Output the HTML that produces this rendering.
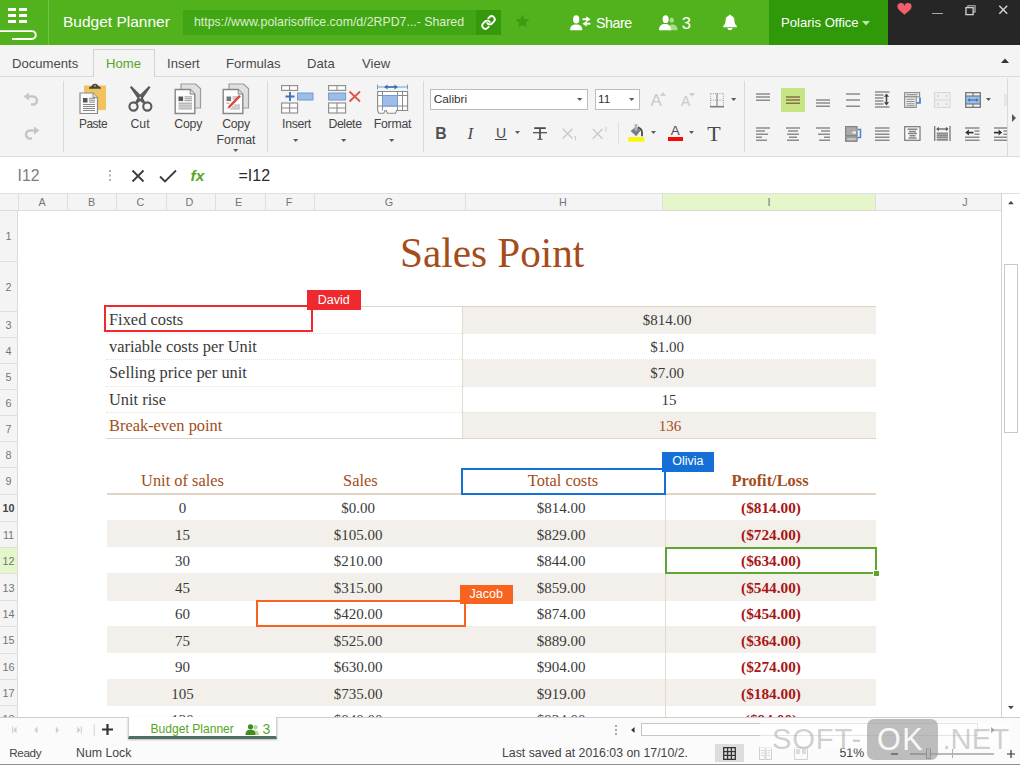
<!DOCTYPE html>
<html lang="en">
<head>
<meta charset="utf-8">
<title>Budget Planner - Polaris Office</title>
<style>
*{box-sizing:border-box;margin:0;padding:0}
html,body{width:1020px;height:765px;overflow:hidden;background:#fff}
body{position:relative;font-family:"Liberation Sans",sans-serif;font-size:13px;color:#444}
.abs{position:absolute}
.t{position:absolute;white-space:nowrap;line-height:1}
svg{position:absolute;overflow:visible}
/* top bar */
#top{left:0;top:0;width:1020px;height:44.500px;background:#51b21e}
#top .t{color:#fff}
/* tabs */
#tabs{left:0;top:45px;width:1020px;height:32px;background:#f4f4f4;border-bottom:1px solid #d9d9d9}
#tabs .t{font-size:13.1px;color:#4a4a4a;top:11.700px}
#hometab{left:93px;top:4px;width:62px;height:28px;background:#f4f4f4;border:1px solid #d4d4d4;border-bottom:none}
/* ribbon */
#ribbon{left:0;top:77px;width:1020px;height:80px;background:#f4f4f4;border-bottom:1px solid #dcdcdc}
#ribbon .lbl{font-size:12.3px;color:#444;text-align:center;transform:translateX(-50%)}
.vsep{position:absolute;width:1px;background:#dadada}
/* formula */
#fbar{left:0;top:157px;width:1020px;height:36px;background:#fff}
/* grid */
#colhdr{left:0;top:193px;width:1001px;height:18px;background:#f4f4f4;border-top:1px solid #e0e0e0;border-bottom:1px solid #dcdcdc}
#colhdr .t{font-size:10.8px;color:#757575;top:3px;transform:translateX(-50%)}
#colhdr i{position:absolute;top:0;width:1px;height:16px;background:#dedede}
#rowhdr{left:0;top:211px;width:18px;height:506px;background:#f4f4f4;border-right:1px solid #dcdcdc;overflow:hidden}
#rowhdr .t{font-size:10.8px;color:#757575;left:0;width:17px;text-align:center}
#rowhdr i{position:absolute;left:0;width:17px;height:1px;background:#dedede}
#grid{left:18px;top:211px;width:983px;height:506px;overflow:hidden;background:#fff}
#grid .c{position:absolute;white-space:nowrap;font-family:"Liberation Serif",serif;font-size:16px;line-height:1;color:#3a3a3a}
#grid .cc{transform:translateX(-50%)}
/* bottom */
#sheetbar{left:0;top:717px;width:1020px;height:24px;background:#fbfbfb;border-top:1px solid #cfcfcf}
#status{left:0;top:741px;width:1020px;height:24px;background:#fbfbfb}
#status .t{font-size:12.3px;color:#444;top:5.500px}
</style>
</head>
<body>

<!-- ================= TOP BAR ================= -->
<div id="top" class="abs">
  <div class="abs" style="left:48px;top:0;width:1px;height:44.500px;background:#72c24a"></div>
  <svg width="48" height="45" style="left:0;top:0">
    <g fill="#fff">
      <rect x="8" y="8" width="8" height="3"/><rect x="19" y="8" width="8" height="3"/>
      <rect x="8" y="14" width="8" height="3"/><rect x="19" y="14" width="8" height="3"/>
      <rect x="8" y="20" width="8" height="3"/><rect x="19" y="20" width="8" height="3"/>
    </g>
    <path d="M0 31.100 H31.800 a3.950 3.950 0 0 1 0 7.900 H12" fill="none" stroke="#fff" stroke-width="1.900"/>
  </svg>
  <div class="t" style="left:63px;top:14px;font-size:15.5px">Budget Planner</div>
  <div class="abs" style="left:183px;top:10px;width:318px;height:25px;background:#41a613"></div>
  <div class="abs" style="left:476px;top:10px;width:25px;height:25px;background:#36990c"></div>
  <div class="t" style="left:194px;top:16px;font-size:12.350px;color:#dcf0cf">https://www.polarisoffice.com/d/2RPD7...- Shared</div>
  <svg width="15" height="15" style="left:480.500px;top:14.500px" viewBox="0 0 24 24">
    <g fill="none" stroke="#fff" stroke-width="3" stroke-linecap="round" stroke-linejoin="round">
      <path d="M10 13a5 5 0 0 0 7.540 .540l3 -3a5 5 0 0 0 -7.070 -7.070l-1.720 1.710"/>
      <path d="M14 11a5 5 0 0 0 -7.540 -.540l-3 3a5 5 0 0 0 7.070 7.070l1.710 -1.710"/>
    </g>
  </svg>
  <svg width="15" height="14.500" style="left:514.800px;top:13.500px" viewBox="0 0 16 16"><path d="M8 0.5 L10.2 5.6 15.6 6.1 11.5 9.7 12.7 15 8 12.2 3.3 15 4.5 9.7 0.4 6.1 5.8 5.6Z" fill="#3a9b11"/></svg>
  <!-- share -->
  <svg width="21" height="16" style="left:569.500px;top:14.500px" viewBox="0 0 21 16">
    <ellipse cx="6.200" cy="4.400" rx="3.100" ry="4.100" fill="#fff"/>
    <path d="M0.100 15.200 c0 -4 2.300 -5.600 6.100 -5.600 s6.100 1.600 6.100 5.600z" fill="#fff"/>
    <path d="M12.500 4.200 h5" stroke="#fff" stroke-width="1.900"/><path d="M16.300 1.200 l4.200 3 -4.200 3z" fill="#fff"/>
    <path d="M15.500 8.700 h5" stroke="#fff" stroke-width="1.900"/><path d="M16.700 5.700 l-4.200 3 4.200 3z" fill="#fff"/>
  </svg>
  <div class="t" style="left:596px;top:15.500px;font-size:14.200px;letter-spacing:-0.400px">Share</div>
  <svg width="19" height="16" style="left:659px;top:14.500px" viewBox="0 0 19 16">
    <ellipse cx="12.800" cy="5.200" rx="2.200" ry="2.600" fill="#a9dc8e"/>
    <path d="M9.500 15.200 c0 -4.200 1.300 -5.700 4 -5.700 s5 1.500 5 5.700z" fill="#a9dc8e"/>
    <ellipse cx="6.600" cy="4.200" rx="3" ry="3.900" fill="#fff"/>
    <path d="M0 15.200 c0 -4.400 2.400 -6.100 6 -6.100 s6 1.700 6 6.100z" fill="#fff"/>
  </svg>
  <div class="t" style="left:681.800px;top:15px;font-size:16.500px">3</div>
  <svg width="14" height="16.500" style="left:722.700px;top:13.500px" viewBox="0 0 16 18">
    <path d="M8 0.300 c-0.900 0 -1.500 0.600 -1.500 1.400 c-2.500 0.800 -3.600 3 -3.600 5.600 c0 3.300 -1.200 4.500 -2.700 6 v1.300 h15.600 v-1.300 c-1.500 -1.500 -2.700 -2.700 -2.700 -6 c0 -2.600 -1.100 -4.800 -3.600 -5.600 c0 -0.800 -0.600 -1.400 -1.500 -1.400z" fill="#fff"/>
    <path d="M5 15.600 a3 2.400 0 0 0 6 0z" fill="#fff"/>
  </svg>
  <div class="abs" style="left:769px;top:0;width:118.500px;height:44.500px;background:#2f990a"></div>
  <div class="t" style="left:781px;top:15.500px;font-size:13.100px">Polaris Office</div>
  <svg width="8" height="5" style="left:862px;top:21px" viewBox="0 0 8 5"><path d="M0 0h8l-4 4.500z" fill="#bfe3ad"/></svg>
  <div class="abs" style="left:887.500px;top:0;width:132.500px;height:44.500px;background:#262626"></div>
  <svg width="15" height="11.500" style="left:897px;top:4.300px" viewBox="0 0 18 14"><path d="M9 13 C3 8.500 0.500 6 0.500 3.800 A3.300 3.300 0 0 1 9 2.300 A3.300 3.300 0 0 1 17.500 3.800 C17.500 6 15 8.500 9 13z" fill="#f25f68"/></svg>
  <div class="abs" style="left:932px;top:12.500px;width:10.500px;height:1.500px;background:#a9a9a9"></div>
  <svg width="11" height="10.500" style="left:965px;top:5.300px" viewBox="0 0 12 12"><path d="M3 3 V0.800 H11.200 V8 H9" fill="none" stroke="#bdbdbd" stroke-width="1.300"/><rect x="0.800" y="3" width="8.200" height="8" fill="none" stroke="#cfcfcf" stroke-width="1.500"/></svg>
  <svg width="10.500" height="9.500" style="left:997.800px;top:5.200px" viewBox="0 0 12 12"><path d="M1 1 L11 11 M11 1 L1 11" stroke="#d6d6d6" stroke-width="1.800"/></svg>
</div>

<!-- ================= TABS ================= -->
<div id="tabs" class="abs">
  <div id="hometab" class="abs"></div>
  <div class="t" style="left:12px">Documents</div>
  <div class="t" style="left:106px;color:#57a51f">Home</div>
  <div class="t" style="left:167px">Insert</div>
  <div class="t" style="left:226px">Formulas</div>
  <div class="t" style="left:307px">Data</div>
  <div class="t" style="left:362px">View</div>
  <svg width="8" height="5" style="left:1001px;top:13px" viewBox="0 0 8 5"><path d="M0 5h8l-4 -4.500z" fill="#333"/></svg>
</div>

<!-- ================= RIBBON ================= -->
<div id="ribbon" class="abs">
<div class="abs" style="left:0;top:-77px;width:1020px;height:765px">
  <!-- undo / redo -->
  <svg width="17" height="15" style="left:23px;top:92px" viewBox="0 0 17 15">
    <path d="M0.500 4.500 L6 0.500 V3.200 H10 a5 5 0 0 1 0 10.500 H8 V11.200 H10 a2.600 2.600 0 0 0 0 -5.400 H6 V8.500Z" fill="#c6c6c6"/>
  </svg>
  <svg width="17" height="15" style="left:23px;top:126px" viewBox="0 0 17 15">
    <path d="M16.500 4.500 L11 0.500 V3.200 H7 a5 5 0 0 0 0 10.500 H9 V11.200 H7 a2.600 2.600 0 0 1 0 -5.400 H11 V8.500Z" fill="#c6c6c6"/>
  </svg>
  <div class="vsep" style="left:63px;top:81px;height:71px"></div>

  <!-- paste -->
  <svg width="28" height="32" style="left:79px;top:82px" viewBox="0 0 28 32">
    <rect x="5" y="3.500" width="22" height="24.500" fill="#f2c35c"/>
    <path d="M10 6.800 c0 -1.700 1 -2.400 2.600 -2.500 c0.400 -1.700 1.600 -2.600 3.400 -2.600 s3 0.900 3.400 2.600 c1.600 0.100 2.600 0.800 2.600 2.500z" fill="#444"/><circle cx="16" cy="3.900" r="0.800" fill="#f2c35c"/>
    <path d="M1 11 h13 l4.500 4.500 v16 h-17.500z" fill="#fafafa" stroke="#8a8a8a" stroke-width="1.200"/>
    <path d="M14 11 v4.500 h4.500" fill="#e2e2e2" stroke="#8a8a8a" stroke-width="1"/>
    <rect x="4" y="16" width="4.500" height="4.500" fill="#555"/>
    <path d="M10 16.300h6 M10 18.200h6 M10 20.100h6 M4 22.500h12 M4 24.500h12 M4 26.500h12 M4 28.500h12" stroke="#8a8a8a" stroke-width="1"/>
  </svg>
  <div class="t lbl" style="left:93px;top:118.600px;font-size:11.900px;letter-spacing:-0.450px">Paste</div>

  <!-- cut -->
  <svg width="25" height="26" style="left:128px;top:86px" viewBox="0 0 25 26">
    <path d="M1.900 1.200 L3.500 -0.100 L14.100 10.400 L17.800 17.200 L15.900 18.300 L10.200 13.200z" fill="#5a5a5a"/>
    <path d="M22.500 1.200 L20.900 -0.100 L10.300 10.400 L6.600 17.200 L8.500 18.300 L14.200 13.200z" fill="#5a5a5a"/>
    <circle cx="5.500" cy="20.500" r="4.100" fill="none" stroke="#5a5a5a" stroke-width="2.100"/>
    <circle cx="19.300" cy="20.500" r="4.100" fill="none" stroke="#5a5a5a" stroke-width="2.100"/>
    <circle cx="12.200" cy="11.700" r="0.900" fill="#f4f4f4"/>
  </svg>
  <div class="t lbl" style="left:140px;top:118px">Cut</div>

  <!-- copy -->
  <svg width="28" height="31" style="left:174.200px;top:83px" viewBox="0 0 28 31">
    <path d="M7 1 h14.500 l5 4.500 v19.500 h-19.500z" fill="#e0e0e0" stroke="#9c9c9c" stroke-width="1.200"/>
    <path d="M1.200 6.500 h15 l4.600 4.600 v19.400 h-19.600z" fill="#fcfcfc" stroke="#868686" stroke-width="1.400"/>
    <path d="M16.200 6.500 v4.600 h4.600" fill="#dedede" stroke="#868686" stroke-width="1"/>
    <rect x="4.500" y="13.500" width="4.600" height="4.600" fill="#555"/>
    <path d="M10.500 13.900h7.500 M10.500 15.800h7.500 M10.500 17.700h7.500 M4.500 20.200h13.500 M4.500 22.100h13.500 M4.500 24h13.500 M4.500 25.900h13.500" stroke="#969696" stroke-width="1"/>
  </svg>
  <div class="t lbl" style="left:188.200px;top:118px;letter-spacing:-0.250px">Copy</div>

  <!-- copy format -->
  <svg width="28" height="31" style="left:222.200px;top:83px" viewBox="0 0 28 31">
    <path d="M7 1 h14.500 l5 4.500 v19.500 h-19.500z" fill="#e0e0e0" stroke="#9c9c9c" stroke-width="1.200"/>
    <path d="M1.200 6.500 h15 l4.600 4.600 v19.400 h-19.600z" fill="#fcfcfc" stroke="#868686" stroke-width="1.400"/>
    <path d="M16.200 6.500 v4.600 h4.600" fill="#dedede" stroke="#868686" stroke-width="1"/>
    <rect x="4.500" y="13.500" width="4.600" height="4.600" fill="#777"/>
    <path d="M10.500 13.900h5 M10.500 15.800h3.500 M4.500 20.200h3 M12 22.100h6 M10 24h8 M8 25.900h10" stroke="#a4a4a4" stroke-width="1"/>
    <path d="M17 11.900 L18.900 13.600 L8.300 24.600 L5.400 25.800 L6.500 22.900Z" fill="#d9463c"/>
  </svg>
  <div class="t lbl" style="left:236px;top:118px;letter-spacing:-0.250px">Copy</div>
  <div class="t lbl" style="left:236px;top:134px">Format</div>
  <svg width="5.400" height="3" style="left:232.800px;top:148.600px" viewBox="0 0 7 4"><path d="M0 0h7l-3.500 4z" fill="#5a5a5a"/></svg>
  <div class="vsep" style="left:267px;top:81px;height:71px"></div>

  <!-- insert -->
  <svg width="33" height="30" style="left:281px;top:84px" viewBox="0 0 33 30">
    <g fill="#fdfdfd" stroke="#8a8a8a" stroke-width="1.100">
      <rect x="0.600" y="1.600" width="16" height="4.800"/><path d="M8.600 1.600v4.800"/>
      <rect x="0.600" y="19" width="16" height="10"/><path d="M8.600 19v10 M0.600 24h16"/>
    </g>
    <path d="M4.500 12.500h9 M9 8v9" stroke="#3f6fb5" stroke-width="1.800"/>
    <rect x="16.500" y="9" width="15.500" height="7" fill="#9dbde6" stroke="#6f9bd6" stroke-width="1"/>
  </svg>
  <div class="t lbl" style="left:296.500px;top:118px;letter-spacing:-0.300px">Insert</div>
  <svg width="5.400" height="3" style="left:293.300px;top:138.600px" viewBox="0 0 7 4"><path d="M0 0h7l-3.500 4z" fill="#5a5a5a"/></svg>

  <!-- delete -->
  <svg width="33" height="30" style="left:328px;top:84px" viewBox="0 0 33 30">
    <g fill="#fdfdfd" stroke="#8a8a8a" stroke-width="1.100">
      <rect x="0.600" y="1.600" width="17" height="4.800"/><path d="M9 1.600v4.800"/>
      <rect x="0.600" y="19" width="17" height="10"/><path d="M9 19v10 M0.600 24h17"/>
    </g>
    <rect x="0.600" y="9" width="17" height="7" fill="#9dbde6" stroke="#6f9bd6" stroke-width="1"/>
    <path d="M21.500 7.500 L32 17.500 M32 7.500 L21.500 17.500" stroke="#e0574f" stroke-width="1.900"/>
  </svg>
  <div class="t lbl" style="left:345px;top:118px;letter-spacing:-0.400px">Delete</div>
  <svg width="5.400" height="3" style="left:341.300px;top:138.600px" viewBox="0 0 7 4"><path d="M0 0h7l-3.500 4z" fill="#5a5a5a"/></svg>

  <!-- format -->
  <svg width="32" height="30" style="left:377px;top:84px" viewBox="0 0 32 30">
    <path d="M0.500 0.500v5 M30.500 0.500v5 M0.500 3h30" stroke="#6f9bd6" stroke-width="1" />
    <path d="M7 3 l3.500 -2.500 v5z M21 3 l-3.500 -2.500 v5z" fill="#3f6fb5"/><path d="M9 3h10" stroke="#3f6fb5" stroke-width="1.600"/>
    <path d="M0.600 7.500 h30 v19 h-11 l-1.200 2.800 h-8 l-1.200 -2.800 h-1.200 l-1.200 2.800 h-5 l-1.200 -2.800z" fill="#fdfdfd" stroke="#8a8a8a" stroke-width="1.100"/>
    <path d="M5.500 7.500v19 M20.500 7.500v19 M25.500 7.500v19 M0.600 11.500h30 M0.600 22h30" stroke="#8a8a8a" stroke-width="1"/>
    <rect x="5.500" y="11.500" width="15" height="10.500" fill="#9dbde6" stroke="#6f9bd6" stroke-width="1"/>
  </svg>
  <div class="t lbl" style="left:392.500px;top:118px;letter-spacing:-0.250px">Format</div>
  <svg width="5.400" height="3" style="left:389.300px;top:138.600px" viewBox="0 0 7 4"><path d="M0 0h7l-3.500 4z" fill="#5a5a5a"/></svg>
  <div class="vsep" style="left:423px;top:81px;height:71px"></div>
  <!-- font name / size -->
  <div class="abs" style="left:430px;top:89px;width:158px;height:21px;background:#fff;border:1px solid #bdbdbd"></div>
  <div class="t" style="left:433.700px;top:93.700px;font-size:11.800px;color:#333">Calibri</div>
  <svg width="5.400" height="3" style="left:577.300px;top:97.600px" viewBox="0 0 7 4"><path d="M0 0h7l-3.500 4z" fill="#5a5a5a"/></svg>
  <div class="abs" style="left:594.500px;top:88.500px;width:45.500px;height:21.500px;background:#fff;border:1px solid #bdbdbd"></div>
  <div class="t" style="left:598px;top:93.700px;font-size:11.800px;color:#333">11</div>
  <svg width="5.400" height="3" style="left:628.800px;top:97.600px" viewBox="0 0 7 4"><path d="M0 0h7l-3.500 4z" fill="#5a5a5a"/></svg>
  <!-- grow / shrink font -->
  <div class="t" style="left:650.500px;top:91.500px;font-size:17px;color:#c9c9c9">A</div>
  <svg width="6" height="4" style="left:660px;top:92px" viewBox="0 0 6 4"><path d="M0 4h6l-3 -4z" fill="#d0d0d0"/></svg>
  <div class="t" style="left:681px;top:94px;font-size:14px;color:#c9c9c9">A</div>
  <svg width="6" height="4" style="left:689px;top:92.500px" viewBox="0 0 6 4"><path d="M0 0h6l-3 4z" fill="#d0d0d0"/></svg>
  <!-- borders -->
  <svg width="14" height="15" style="left:710px;top:92.800px" viewBox="0 0 14 15">
    <path d="M0.600 0.600h12.800 M0.600 0.600v13 M13.400 0.600v13 M0.600 7.200h12.800" stroke="#9a9a9a" stroke-width="1" stroke-dasharray="1 1.200" fill="none"/>
    <path d="M7 0.600v13" stroke="#8a8a8a" stroke-width="1.200"/>
    <path d="M0 13.700h14" stroke="#808080" stroke-width="1.600"/>
  </svg>
  <svg width="5.400" height="3" style="left:731px;top:97.800px" viewBox="0 0 7 4"><path d="M0 0h7l-3.500 4z" fill="#5a5a5a"/></svg>

  <!-- B I U S x2 x2 -->
  <div class="t" style="left:435.200px;top:125.800px;font-size:15.800px;font-weight:bold;color:#505050">B</div>
  <div class="t" style="left:467.500px;top:124.500px;font-size:17px;font-style:italic;font-family:'Liberation Serif',serif;color:#4a4a4a">I</div>
  <div class="t" style="left:496px;top:126px;font-size:14px;color:#4a4a4a">U</div>
  <div class="abs" style="left:495px;top:139.200px;width:12px;height:1.300px;background:#4a4a4a"></div>
  <svg width="5" height="2.900" style="left:514.500px;top:131.300px" viewBox="0 0 6 3.500"><path d="M0 0h6l-3 3.500z" fill="#5a5a5a"/></svg>
  <svg width="14" height="13" style="left:533px;top:127px" viewBox="0 0 14 13">
    <path d="M1.200 1.200h11.600 M7 1.200v11" stroke="#4a4a4a" stroke-width="1.700" fill="none"/>
    <path d="M0 5.700h14" stroke="#4a4a4a" stroke-width="1.200"/>
    <path d="M4.500 12.300h5" stroke="#4a4a4a" stroke-width="1"/>
  </svg>
  <svg width="16" height="13" style="left:562px;top:127.500px" viewBox="0 0 16 13">
    <path d="M0.800 0.800 L10.500 10.500 M10.500 0.800 L0.800 10.500" stroke="#cacaca" stroke-width="1.500"/>
    <path d="M13.500 8v4.500 M12.500 9l1 -1" stroke="#cacaca" stroke-width="0.900" fill="none"/>
  </svg>
  <svg width="16" height="13" style="left:591.500px;top:126.500px" viewBox="0 0 16 13">
    <path d="M0.800 2 L10.500 11.700 M10.500 2 L0.800 11.700" stroke="#cacaca" stroke-width="1.500"/>
    <path d="M14 0.300v4.500 M13 1.300l1 -1" stroke="#cacaca" stroke-width="0.900" fill="none"/>
  </svg>
  <div class="vsep" style="left:618px;top:122px;height:23px;background:#e0e0e0"></div>
  <!-- fill colour -->
  <svg width="17" height="18" style="left:628px;top:124px" viewBox="0 0 17 18">
    <path d="M2.600 7 L8 2.800 L12.600 6.600 L8.200 12.200Z" fill="#7d7d7d"/>
    <path d="M9.800 3.300 C12.500 4.200 14 6.200 14 8.500 V12.200" fill="none" stroke="#4d4d4d" stroke-width="1.800"/>
    <rect x="6.600" y="0.200" width="2.800" height="6.600" fill="#a5b7ca"/>
    <rect x="0.200" y="13.200" width="16.100" height="4.500" fill="#fdf600"/>
  </svg>
  <svg width="5" height="2.900" style="left:650.500px;top:131.300px" viewBox="0 0 6 3.500"><path d="M0 0h6l-3 3.500z" fill="#5a5a5a"/></svg>
  <!-- font colour -->
  <div class="t" style="left:670.700px;top:124.300px;font-size:13.500px;color:#4a4a4a">A</div>
  <div class="abs" style="left:667.500px;top:137.300px;width:15.700px;height:3.900px;background:#f50808"></div>
  <svg width="5" height="2.900" style="left:689.000px;top:131.300px" viewBox="0 0 6 3.500"><path d="M0 0h6l-3 3.500z" fill="#5a5a5a"/></svg>
  <!-- T -->
  <div class="t" style="left:707.300px;top:122.700px;font-size:22px;font-family:'Liberation Serif',serif;color:#4a4a4a">T</div>
  <div class="vsep" style="left:744px;top:81px;height:71px"></div>
  <!-- alignment row 1 -->
  <svg width="14" height="8" style="left:756px;top:93px" viewBox="0 0 14 8"><path d="M0 1h14 M0 4.100h14 M0 7.200h14" stroke="#8c8c8c" stroke-width="1.500"/></svg>
  <div class="abs" style="left:781px;top:88px;width:24px;height:23.500px;background:#c6e585"></div>
  <svg width="14" height="8" style="left:786px;top:96px" viewBox="0 0 14 8"><path d="M0 1h14 M0 4.100h14 M0 7.200h14" stroke="#8a7048" stroke-width="1.500"/></svg>
  <svg width="14" height="8" style="left:816px;top:99px" viewBox="0 0 14 8"><path d="M0 1h14 M0 4.100h14 M0 7.200h14" stroke="#8c8c8c" stroke-width="1.500"/></svg>
  <svg width="14" height="14" style="left:846px;top:93px" viewBox="0 0 14 14"><path d="M0 1h14 M0 7.100h14 M0 13.200h14" stroke="#8c8c8c" stroke-width="1.500"/></svg>
  <!-- line spacing -->
  <svg width="15" height="17" style="left:875px;top:91px" viewBox="0 0 15 17">
    <path d="M0 1h14.500 M0 4h8.500 M0 7h8.500 M0 10h8.500 M0 13h8.500 M0 16h14.500" stroke="#8c8c8c" stroke-width="1.300"/>
    <path d="M11.500 4.500v8" stroke="#444" stroke-width="1.500"/>
    <path d="M11.500 2.500 l2.600 3.200 h-5.200z M11.500 14.500 l2.600 -3.200 h-5.200z" fill="#444"/>
  </svg>
  <!-- wrap text -->
  <svg width="18" height="16" style="left:904px;top:92px" viewBox="0 0 18 16">
    <rect x="0.600" y="0.600" width="15" height="4.200" fill="#ececec" stroke="#8a8a8a" stroke-width="1.100"/>
    <path d="M2.500 2.700h11" stroke="#8a8a8a" stroke-width="1.100"/>
    <rect x="0.600" y="4.800" width="11.600" height="10.600" fill="#ececec" stroke="#8a8a8a" stroke-width="1.100"/>
    <path d="M2.500 7.300h8 M2.500 9.500h8 M2.500 11.700h8 M2.500 13.700h8" stroke="#8f8f8f" stroke-width="1.100"/>
    <path d="M16 5.500v5.300h-3.600" fill="none" stroke="#4a82d4" stroke-width="1.800"/>
  </svg>
  <!-- disabled icon -->
  <svg width="17" height="16" style="left:934px;top:92px" viewBox="0 0 17 16">
    <rect x="0.600" y="0.600" width="15.500" height="14.800" fill="#f0f0f0" stroke="#d6d6d6" stroke-width="1"/>
    <path d="M0.600 8h15.500" stroke="#d6d6d6" stroke-width="1"/>
    <path d="M3 3l2 2m0 -2l-2 2 M11.500 3l2 2m0 -2l-2 2 M3 11l2 2m0 -2l-2 2 M11.500 11l2 2m0 -2l-2 2" stroke="#d2d2d2" stroke-width="0.900"/>
  </svg>
  <!-- merge -->
  <svg width="16" height="16" style="left:964.500px;top:92px" viewBox="0 0 16 16">
    <rect x="0.700" y="0.700" width="14.600" height="14.600" fill="#f6f6f6" stroke="#777" stroke-width="1.300"/>
    <path d="M8 0.700v3.300 M8 12v3.300" stroke="#777" stroke-width="1.200"/>
    <rect x="0.700" y="4" width="14.600" height="8" fill="#9cc0ee" stroke="#777" stroke-width="1.200"/>
    <path d="M3.500 8h9" stroke="#3f74c0" stroke-width="1.300"/>
    <path d="M2.300 8l2.500 -2v4z M13.700 8l-2.500 -2v4z" fill="#3f74c0"/>
  </svg>
  <svg width="5" height="2.900" style="left:986.000px;top:97.800px" viewBox="0 0 6 3.500"><path d="M0 0h6l-3 3.500z" fill="#5a5a5a"/></svg>
  <div class="abs" style="left:1003.500px;top:94px;width:3px;height:12px;background:#e6e6e6"></div>

  <!-- alignment row 2 -->
  <svg width="14" height="14" style="left:756px;top:126.500px" viewBox="0 0 14 14"><path d="M0 1h14 M0 4.100h9 M0 7.200h12 M0 10.300h6 M0 13.300h11" stroke="#8c8c8c" stroke-width="1.500"/></svg>
  <svg width="14" height="14" style="left:786px;top:126.500px" viewBox="0 0 14 14"><path d="M0 1h14 M2 4.100h10 M1 7.200h12 M3 10.300h8 M1 13.300h12" stroke="#8c8c8c" stroke-width="1.500"/></svg>
  <svg width="14" height="14" style="left:816px;top:126.500px" viewBox="0 0 14 14"><path d="M0 1h14 M5 4.100h9 M2 7.200h12 M8 10.300h6 M3 13.300h11" stroke="#8c8c8c" stroke-width="1.500"/></svg>
  <svg width="17" height="16" style="left:844.500px;top:126px" viewBox="0 0 17 16">
    <rect x="0.600" y="0.600" width="11.500" height="9" fill="#a9a9a9" stroke="#808080" stroke-width="1.100"/>
    <rect x="0.600" y="10.800" width="11.500" height="4.500" fill="#a9a9a9" stroke="#808080" stroke-width="1.100"/>
    <rect x="7.500" y="5.500" width="3.500" height="2" fill="#f4f4f4"/>
    <path d="M2.500 13h8" stroke="#dcdcdc" stroke-width="1"/>
    <path d="M13 3.500h2.500v8h-3" fill="none" stroke="#4a86d6" stroke-width="1.500"/>
  </svg>
  <svg width="15" height="14" style="left:875px;top:126.500px" viewBox="0 0 15 14"><path d="M0 1h14.500 M0 4.100h14.500 M0 7.200h14.500 M0 10.300h14.500 M0 13.300h14.500" stroke="#8c8c8c" stroke-width="1.500"/></svg>
  <svg width="17" height="15" style="left:904px;top:126px" viewBox="0 0 17 15">
    <rect x="0.700" y="0.700" width="15.300" height="13.600" fill="#fafafa" stroke="#808080" stroke-width="1.300"/>
    <path d="M3.500 3.200h10 M5 5.400h7 M4 7.600h9 M5.500 9.800h6 M4.500 12h8" stroke="#858585" stroke-width="1.500"/>
  </svg>
  <svg width="17" height="15" style="left:934px;top:126px" viewBox="0 0 17 15">
    <path d="M0.700 0v15 M16 0v15" stroke="#777" stroke-width="1.300"/>
    <path d="M3.500 3h10" stroke="#555" stroke-width="1.200"/>
    <path d="M2.200 3l2.600 -2.200v4.400z M14.500 3l-2.600 -2.200v4.400z" fill="#555"/>
    <path d="M2.700 7.300h11.300 M2.700 9.500h11.300 M2.700 11.700h11.300 M2.700 13.900h11.300" stroke="#8a8a8a" stroke-width="1.800"/>
  </svg>
  <svg width="15" height="14" style="left:964.500px;top:126.500px" viewBox="0 0 15 14">
    <path d="M0 1h14.500 M9.500 4.100h5 M9.500 7.200h5 M0 10.300h14.500 M0 13.300h14.500" stroke="#8c8c8c" stroke-width="1.500"/>
    <path d="M2.500 5.600h6" stroke="#333" stroke-width="1.700"/><path d="M0.300 5.600l3.600 -3v6z" fill="#333"/>
  </svg>
  <svg width="13" height="14" style="left:994px;top:126.500px" viewBox="0 0 13 14">
    <path d="M0 1h13 M9.500 4.100h3.500 M9.500 7.200h3.500 M0 10.300h13 M0 13.300h13" stroke="#8c8c8c" stroke-width="1.500"/>
    <path d="M0 5.600h6" stroke="#333" stroke-width="1.700"/><path d="M8.200 5.600l-3.600 -3v6z" fill="#333"/>
  </svg>
  <div class="abs" style="left:1007px;top:78px;width:13px;height:78px;background:#f4f4f4;border-left:1px solid #dadada"></div>
  <svg width="4" height="8" style="left:1012px;top:113.500px" viewBox="0 0 4 8"><path d="M0 0v8l4 -4z" fill="#555"/></svg>


</div>

</div>

<!-- ================= FORMULA BAR ================= -->
<div id="fbar" class="abs">
  <div class="t" style="left:17.500px;top:11px;font-size:15.800px;color:#7d7d7d">I12</div>
  <div class="abs" style="left:109.300px;top:12.500px;width:2px;height:2px;background:#b0b0b0;box-shadow:0 4.500px 0 #b0b0b0,0 9px 0 #b0b0b0"></div>
  <svg width="14" height="14" style="left:131px;top:12px" viewBox="0 0 14 14"><path d="M1.500 1.500 L12.500 12.500 M12.500 1.500 L1.500 12.500" stroke="#3c3c3c" stroke-width="1.800"/></svg>
  <svg width="18" height="14" style="left:159px;top:12px" viewBox="0 0 18 14"><path d="M1 7.500 L6 12.500 L17 1.500" fill="none" stroke="#3c3c3c" stroke-width="1.800"/></svg>
  <div class="t" style="left:190.500px;top:10.500px;font-size:15.500px;font-style:italic;font-weight:bold;color:#5aa61e">fx</div>
  <div class="t" style="left:238.500px;top:11px;font-size:16px;color:#2a2a2a">=I12</div>
</div>

<!-- ================= GRID ================= -->
<div id="colhdr" class="abs">
  <div class="abs" style="left:663px;top:0;width:213px;height:16px;background:#e4f6ca"></div>
  <i style="left:18px"></i>
  <i style="left:67px"></i>
  <i style="left:116px"></i>
  <i style="left:166px"></i>
  <i style="left:215px"></i>
  <i style="left:265px"></i>
  <i style="left:314px"></i>
  <i style="left:465px"></i>
  <i style="left:662px"></i>
  <i style="left:875px"></i>
  <div class="t" style="left:42px">A</div>
  <div class="t" style="left:91.5px">B</div>
  <div class="t" style="left:140.5px">C</div>
  <div class="t" style="left:189.5px">D</div>
  <div class="t" style="left:238.5px">E</div>
  <div class="t" style="left:289px">F</div>
  <div class="t" style="left:389px">G</div>
  <div class="t" style="left:563px">H</div>
  <div class="t" style="left:769px">I</div>
  <div class="t" style="left:965px">J</div>
</div>
<div id="rowhdr" class="abs">
  <div class="abs" style="left:0;top:337px;width:17px;height:26px;background:#e4f6ca"></div>
  <i style="top:50px"></i>
  <i style="top:100px"></i>
  <i style="top:126px"></i>
  <i style="top:152px"></i>
  <i style="top:178px"></i>
  <i style="top:204px"></i>
  <i style="top:230px"></i>
  <i style="top:256px"></i>
  <i style="top:283px"></i>
  <i style="top:310px"></i>
  <i style="top:336px"></i>
  <i style="top:362px"></i>
  <i style="top:389px"></i>
  <i style="top:415px"></i>
  <i style="top:442px"></i>
  <i style="top:468px"></i>
  <i style="top:494px"></i>
  <div class="t" style="top:20.3px">1</div>
  <div class="t" style="top:70.8px">2</div>
  <div class="t" style="top:108.8px">3</div>
  <div class="t" style="top:134.8px">4</div>
  <div class="t" style="top:160.8px">5</div>
  <div class="t" style="top:186.8px">6</div>
  <div class="t" style="top:212.5px">7</div>
  <div class="t" style="top:238.5px">8</div>
  <div class="t" style="top:265.3px">9</div>
  <div class="t" style="top:292.1px;font-weight:bold;color:#444">10</div>
  <div class="t" style="top:318.8px">11</div>
  <div class="t" style="top:345.3px">12</div>
  <div class="t" style="top:371.5px">13</div>
  <div class="t" style="top:397.8px">14</div>
  <div class="t" style="top:424.1px">15</div>
  <div class="t" style="top:450.5px">16</div>
  <div class="t" style="top:476.8px">17</div>
  <div class="t" style="top:502.8px">18</div>
</div>
<div id="grid" class="abs">
<div class="abs" style="left:-18px;top:-211px;width:1020px;height:765px">
  <div class="c" style="left:400px;top:233.0px;font-size:41.2px;color:#a44d1b">Sales Point</div>
  <div class="abs" style="left:463px;top:307px;width:413px;height:26px;background:#f3f0eb"></div>
  <div class="abs" style="left:463px;top:359.5px;width:413px;height:26.5px;background:#f3f0eb"></div>
  <div class="abs" style="left:463px;top:412px;width:413px;height:26px;background:#f3f0eb"></div>
  <div class="abs" style="left:106px;top:306px;width:770px;height:1px;background:#e0d4c5"></div>
  <div class="abs" style="left:106px;top:438px;width:770px;height:1px;background:#e0d4c5"></div>
  <div class="abs" style="left:461.800px;top:307px;width:1.400px;height:131px;background:#e3dacd"></div>
  <div class="abs" style="left:106px;top:333px;width:770px;height:0;border-top:1px dotted #e9e2d8"></div>
  <div class="abs" style="left:106px;top:359px;width:770px;height:0;border-top:1px dotted #e9e2d8"></div>
  <div class="abs" style="left:106px;top:386px;width:770px;height:0;border-top:1px dotted #e9e2d8"></div>
  <div class="abs" style="left:106px;top:412px;width:770px;height:0;border-top:1px dotted #e9e2d8"></div>
  <div class="c" style="left:109px;top:312.1px;font-size:16.4px">Fixed costs</div>
  <div class="c cc" style="left:667px;top:313.2px;font-size:15px">$814.00</div>
  <div class="c" style="left:109px;top:338.7px;font-size:16.4px">variable costs per Unit</div>
  <div class="c cc" style="left:667px;top:339.8px;font-size:15px">$1.00</div>
  <div class="c" style="left:109px;top:365.1px;font-size:16.4px">Selling price per unit</div>
  <div class="c cc" style="left:667px;top:366.2px;font-size:15px">$7.00</div>
  <div class="c" style="left:109px;top:391.7px;font-size:16.4px">Unit rise</div>
  <div class="c cc" style="left:669px;top:392.8px;font-size:15px">15</div>
  <div class="c" style="left:109px;top:418.1px;font-size:16.4px;color:#a44d1b">Break-even point</div>
  <div class="c cc" style="left:670px;top:419.2px;font-size:15px;color:#a44d1b">136</div>
  <div class="abs" style="left:106.700px;top:520.200px;width:769.300px;height:27.300px;background:#f3f0eb"></div>
  <div class="abs" style="left:106.700px;top:573.300px;width:769.300px;height:27.300px;background:#f3f0eb"></div>
  <div class="abs" style="left:106.700px;top:626px;width:769.300px;height:27.300px;background:#f3f0eb"></div>
  <div class="abs" style="left:106.700px;top:679.200px;width:769.300px;height:27px;background:#f3f0eb"></div>
  <div class="abs" style="left:107px;top:493px;width:769px;height:1.5px;background:#e0d4c5"></div>
  <div class="abs" style="left:665px;top:467px;width:1px;height:251px;background:#e3dacd"></div>
  <div class="c cc" style="left:182.5px;top:472.8px;font-size:16.400px;color:#a44d1b">Unit of sales</div>
  <div class="c cc" style="left:360.4px;top:472.8px;font-size:16.400px;color:#a44d1b">Sales</div>
  <div class="c cc" style="left:563px;top:472.8px;font-size:16.400px;color:#a44d1b">Total costs</div>
  <div class="c cc" style="left:770px;top:472.8px;font-size:16.400px;color:#a44d1b;font-weight:bold">Profit/Loss</div>
  <div class="c cc" style="left:182.5px;top:501px;font-size:15px">0</div>
  <div class="c cc" style="left:358px;top:501px;font-size:15px">$0.00</div>
  <div class="c cc" style="left:561px;top:501px;font-size:15px">$814.00</div>
  <div class="c cc" style="left:771px;top:500px;font-size:15.300px;font-weight:bold;color:#a81616">($814.00)</div>
  <div class="c cc" style="left:182.5px;top:528px;font-size:15px">15</div>
  <div class="c cc" style="left:358px;top:528px;font-size:15px">$105.00</div>
  <div class="c cc" style="left:561px;top:528px;font-size:15px">$829.00</div>
  <div class="c cc" style="left:771px;top:527px;font-size:15.300px;font-weight:bold;color:#a81616">($724.00)</div>
  <div class="c cc" style="left:182.5px;top:554px;font-size:15px">30</div>
  <div class="c cc" style="left:358px;top:554px;font-size:15px">$210.00</div>
  <div class="c cc" style="left:561px;top:554px;font-size:15px">$844.00</div>
  <div class="c cc" style="left:771px;top:553px;font-size:15.300px;font-weight:bold;color:#a81616">($634.00)</div>
  <div class="c cc" style="left:182.5px;top:581px;font-size:15px">45</div>
  <div class="c cc" style="left:358px;top:581px;font-size:15px">$315.00</div>
  <div class="c cc" style="left:561px;top:581px;font-size:15px">$859.00</div>
  <div class="c cc" style="left:771px;top:580px;font-size:15.300px;font-weight:bold;color:#a81616">($544.00)</div>
  <div class="c cc" style="left:182.5px;top:607px;font-size:15px">60</div>
  <div class="c cc" style="left:358px;top:607px;font-size:15px">$420.00</div>
  <div class="c cc" style="left:561px;top:607px;font-size:15px">$874.00</div>
  <div class="c cc" style="left:771px;top:606px;font-size:15.300px;font-weight:bold;color:#a81616">($454.00)</div>
  <div class="c cc" style="left:182.5px;top:634px;font-size:15px">75</div>
  <div class="c cc" style="left:358px;top:634px;font-size:15px">$525.00</div>
  <div class="c cc" style="left:561px;top:634px;font-size:15px">$889.00</div>
  <div class="c cc" style="left:771px;top:633px;font-size:15.300px;font-weight:bold;color:#a81616">($364.00)</div>
  <div class="c cc" style="left:182.5px;top:660px;font-size:15px">90</div>
  <div class="c cc" style="left:358px;top:660px;font-size:15px">$630.00</div>
  <div class="c cc" style="left:561px;top:660px;font-size:15px">$904.00</div>
  <div class="c cc" style="left:771px;top:659px;font-size:15.300px;font-weight:bold;color:#a81616">($274.00)</div>
  <div class="c cc" style="left:182.5px;top:687px;font-size:15px">105</div>
  <div class="c cc" style="left:358px;top:687px;font-size:15px">$735.00</div>
  <div class="c cc" style="left:561px;top:687px;font-size:15px">$919.00</div>
  <div class="c cc" style="left:771px;top:686px;font-size:15.300px;font-weight:bold;color:#a81616">($184.00)</div>
  <div class="c cc" style="left:182.5px;top:713px;font-size:15px">120</div>
  <div class="c cc" style="left:358px;top:713px;font-size:15px">$840.00</div>
  <div class="c cc" style="left:561px;top:713px;font-size:15px">$934.00</div>
  <div class="c cc" style="left:771px;top:712px;font-size:15.300px;font-weight:bold;color:#a81616">($94.00)</div>
  <div class="abs" style="left:104px;top:305px;width:208.500px;height:27.300px;border:2px solid #ee2a2f"></div>
  <div class="abs" style="left:307px;top:290px;width:53.5px;height:20px;background:#ee2a2f;color:#fff;font-size:12.5px;line-height:20px;text-align:center">David</div>
  <div class="abs" style="left:461px;top:467.500px;width:205px;height:27px;border:2px solid #1470d6"></div>
  <div class="abs" style="left:661.500px;top:452.300px;width:52.800px;height:19.500px;background:#1470d6;color:#fff;font-size:12.5px;line-height:19.0px;text-align:center">Olivia</div>
  <div class="abs" style="left:256px;top:600.300px;width:209.500px;height:26.700px;border:2px solid #f8641f"></div>
  <div class="abs" style="left:459.500px;top:584.500px;width:53.500px;height:19.800px;background:#f8641f;color:#fff;font-size:12.5px;line-height:19px;text-align:center">Jacob</div>
  <div class="abs" style="left:665px;top:547px;width:211.700px;height:27px;border:2px solid #5da630"></div>
  <div class="abs" style="left:872.5px;top:569.5px;width:7px;height:7px;background:#5ca52a;border:1px solid #fff"></div>
</div>
</div>
<!-- vertical scrollbar -->
<div class="abs" style="left:1001px;top:193px;width:19px;height:524px;background:#fff;border-left:1px solid #d4d4d4;border-top:1px solid #e0e0e0"></div>
<svg width="5.800" height="3.300" style="left:1008.100px;top:200.800px" viewBox="0 0 7 4"><path d="M0 4h7l-3.500 -4z" fill="#444"/></svg>
<div class="abs" style="left:1004px;top:264px;width:14px;height:169px;background:#fff;border:1px solid #c9c9c9"></div>
<svg width="5.800" height="3.300" style="left:1008.100px;top:705.500px" viewBox="0 0 7 4"><path d="M0 0h7l-3.500 4z" fill="#444"/></svg>

<!-- ================= SHEET BAR ================= -->
<div id="sheetbar" class="abs">
  <svg width="100" height="12" style="left:8px;top:5.500px" viewBox="0 0 100 12">
    <g fill="#cfcfcf">
      <rect x="4" y="2.500" width="1.100" height="7"/><path d="M8.500 2.500v7l-3.200 -3.500z"/>
      <path d="M29.500 2.500v7l-3.200 -3.500z"/>
      <path d="M47.800 2.500v7l3.200 -3.500z"/>
      <path d="M69.200 2.500v7l3.200 -3.500z"/><rect x="72.800" y="2.500" width="1.100" height="7"/>
      <rect x="85.700" y="0.500" width="1" height="11"/>
    </g>
  </svg>
  <svg width="11" height="11" style="left:102px;top:6px" viewBox="0 0 11 11"><path d="M5.500 0v11 M0 5.500h11" stroke="#333" stroke-width="2.200"/></svg>
  <div class="abs" style="left:128px;top:-1px;width:149px;height:21.500px;background:#fff;border-left:1px solid #cfcfcf;border-right:1px solid #cfcfcf;border-bottom:3.500px solid #4f6f60;box-shadow:0 1px 2px rgba(0,0,0,.25)"></div>
  <div class="t" style="left:150.500px;top:4.700px;font-size:12.100px;color:#57a51f">Budget Planner</div>
  <svg width="15" height="11" style="left:244.500px;top:5.500px" viewBox="0 0 15 11">
    <circle cx="10.500" cy="3.300" r="2.200" fill="#b5d99a"/><path d="M7.500 11c0 -3.500 1.300 -4.500 3 -4.500s3.500 1 3.500 4.500z" fill="#b5d99a"/>
    <circle cx="5.500" cy="2.800" r="2.600" fill="#3f8f1a"/><path d="M0.500 11c0 -4 2 -5.200 5 -5.200s5 1.200 5 5.200z" fill="#3f8f1a"/>
  </svg>
  <div class="t" style="left:262.500px;top:3.500px;font-size:14px;color:#57a51f">3</div>
  <div class="abs" style="left:615px;top:6.500px;width:2px;height:2px;background:#a9a9a9;box-shadow:0 4px 0 #a9a9a9,0 8px 0 #a9a9a9"></div>
  <svg width="3.700" height="6" style="left:630.700px;top:8.500px" viewBox="0 0 4 7"><path d="M4 0v7l-4 -3.500z" fill="#333"/></svg>
  <div class="abs" style="left:641px;top:5px;width:337px;height:13px;background:#fff;border:1px solid #c6c6c6"></div>
  <svg width="3.700" height="6" style="left:990.700px;top:8.500px" viewBox="0 0 4 7"><path d="M0 0v7l4 -3.500z" fill="#333"/></svg>
</div>

<!-- ================= STATUS ================= -->
<div id="status" class="abs">
  <div class="t" style="left:9.300px;font-size:11.700px;letter-spacing:-0.400px;top:6px">Ready</div>
  <div class="t" style="left:76px">Num Lock</div>
  <div class="t" style="left:502px">Last saved at 2016:03 on 17/10/2.</div>
  <div class="abs" style="left:714.500px;top:3px;width:29.500px;height:18px;background:#dddddd"></div>
  <svg width="13" height="13" style="left:723px;top:5.500px" viewBox="0 0 13 13"><path d="M0.700 0.700h11.600v11.600h-11.600z M4.600 0.700v11.600 M8.400 0.700v11.600 M0.700 4.600h11.600 M0.700 8.400h11.600" fill="none" stroke="#333" stroke-width="1.300"/></svg>
  <svg width="13" height="13" style="left:758.500px;top:5.500px" viewBox="0 0 13 13"><path d="M0.500 0.500h5.500v12h-5.500z M7 0.500h5.500v12h-5.500z" fill="#fafafa" stroke="#cfcfcf" stroke-width="1"/><path d="M2 3.500h2.500 M2 6h2.500 M2 8.500h2.500 M8.500 3.500h2.500 M8.500 6h2.500 M8.500 8.500h2.500" stroke="#d6d6d6" stroke-width="1"/></svg>
  <svg width="14" height="13" style="left:793.500px;top:5.500px" viewBox="0 0 14 13"><path d="M0.500 0.500h13v12h-13z" fill="#fafafa" stroke="#d2d2d2" stroke-width="1"/><rect x="2" y="2" width="4" height="5" fill="#dcdcdc"/><rect x="8" y="2" width="4" height="5" fill="#dcdcdc"/></svg>
  <div class="t" style="left:839.500px">51%</div>
  <div class="abs" style="left:891px;top:12px;width:7px;height:1.500px;background:#444"></div>
  <div class="abs" style="left:910px;top:11.500px;width:84px;height:2.200px;background:#b9b9b9"></div><div class="abs" style="left:910px;top:11.500px;width:17px;height:2.200px;background:#a0a0a0"></div>
  
  <div class="abs" style="left:952px;top:8px;width:1px;height:9px;background:#b0b0b0"></div>
  <div class="abs" style="left:926px;top:6.500px;width:4.500px;height:11.500px;background:#e9e9e9;border:1px solid #8a8a8a"></div>
  <svg width="8" height="8" style="left:1007.300px;top:8.700px" viewBox="0 0 8 8"><path d="M4 0v8 M0 4h8" stroke="#333" stroke-width="1.200"/></svg>
  <div class="abs" style="left:0;top:22.500px;width:1020px;height:1.500px;background:#8f8f8f"></div>
</div>

<div class="abs" style="left:760px;top:722px;width:250px;height:27px;background:rgba(255,255,255,.55)"></div>
<div class="abs" style="left:867px;top:719px;width:71px;height:41px;border-radius:7px;background:rgba(150,150,150,.62)"></div>
<div class="t" style="left:772px;top:724.500px;font-size:29.200px;color:rgba(150,150,150,.46);letter-spacing:0.800px">SOFT-</div>
<div class="t" style="left:877px;top:724.200px;font-size:30.500px;color:rgba(255,255,255,.92);letter-spacing:1.500px">OK</div>
<div class="t" style="left:942.500px;top:724.500px;font-size:29.200px;color:rgba(150,150,150,.46)">.NET</div>
</body>
</html>
